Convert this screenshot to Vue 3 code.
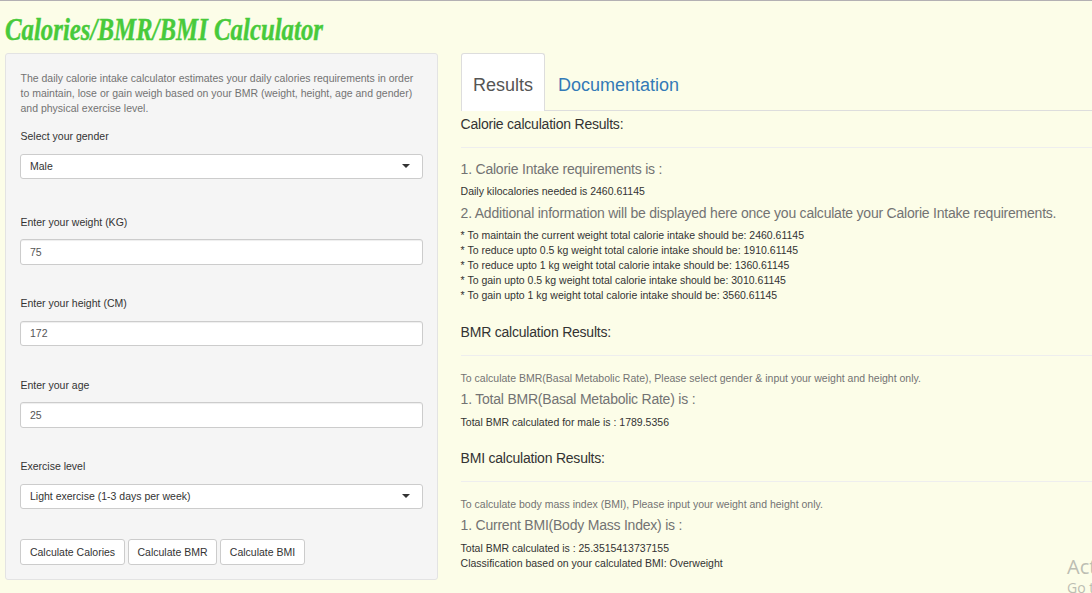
<script setup>
const intake = [
  'To maintain the current weight total calorie intake should be: 2460.61145',
  'To reduce upto 0.5 kg weight total calorie intake should be: 1910.61145',
  'To reduce upto 1 kg weight total calorie intake should be: 1360.61145',
  'To gain upto 0.5 kg weight total calorie intake should be: 3010.61145',
  'To gain upto 1 kg weight total calorie intake should be: 3560.61145',
]
const fields = [
  { label: 'Select your gender', value: 'Male', select: true },
  { label: 'Enter your weight (KG)', value: '75' },
  { label: 'Enter your height (CM)', value: '172' },
  { label: 'Enter your age', value: '25' },
  { label: 'Exercise level', value: 'Light exercise (1-3 days per week)', select: true },
]
const actions = ['Calculate Calories', 'Calculate BMR', 'Calculate BMI']
</script>

<template>
  <div class="page">
    <header>
      <svg class="title" width="330" height="52" viewBox="0 0 330 52">
        <text x="5" y="39" textLength="318" lengthAdjust="spacingAndGlyphs">Calories/BMR/BMI Calculator</text>
      </svg>
    </header>
    <main>
      <section class="panel">
        <p class="intro">
          The daily calorie intake calculator estimates your daily calories requirements in order<br />
          to maintain, lose or gain weigh based on your BMR (weight, height, age and gender)<br />
          and physical exercise level.
        </p>
        <div v-for="(f, i) in fields" :key="f.label" class="field" :class="'f' + i">
          <div class="label">{{ f.label }}</div>
          <div class="control" :class="{ select: f.select }">
            <span>{{ f.value }}</span>
            <svg v-if="f.select" width="8" height="4" viewBox="0 0 8 4"><path d="M0 0H8L4 4Z" /></svg>
          </div>
        </div>
        <div class="actions">
          <button v-for="a in actions" :key="a">{{ a }}</button>
        </div>
      </section>
      <section class="output">
        <nav>
          <a class="active">Results</a>
          <a>Documentation</a>
        </nav>
        <h4 class="first">Calorie calculation Results:</h4>
        <hr />
        <h5 class="lead">1. Calorie Intake requirements is :</h5>
        <p class="daily">Daily kilocalories needed is 2460.61145</p>
        <h5>2. Additional information will be displayed here once you calculate your Calorie Intake requirements.</h5>
        <p v-for="(t, i) in intake" :key="t" :class="{ after: i === 0 }">* {{ t }}</p>
        <h4>BMR calculation Results:</h4>
        <hr />
        <p class="help">To calculate BMR(Basal Metabolic Rate), Please select gender &amp; input your weight and height only.</p>
        <h5>1. Total BMR(Basal Metabolic Rate) is :</h5>
        <p class="total">Total BMR calculated for male is : 1789.5356</p>
        <h4 class="bmi">BMI calculation Results:</h4>
        <hr />
        <p class="help">To calculate body mass index (BMI), Please input your weight and height only.</p>
        <h5>1. Current BMI(Body Mass Index) is :</h5>
        <p class="total">Total BMR calculated is : 25.3515413737155</p>
        <p>Classification based on your calculated BMI: Overweight</p>
      </section>
    </main>
    <div class="watermark"><div>Act</div><small>Go t</small></div>
  </div>
</template>

<style>
html, body { margin: 0; overflow: hidden; background: #fcfde8; }
</style>

<style scoped>
* { box-sizing: border-box; }
.page {
  position: relative;
  width: 1092px;
  height: 593px;
  overflow: hidden;
  background: #fcfde8;
  border-top: 1px solid #b3b0b3;
  color: #333;
  font: 10.5px/15px "Liberation Sans", Arial, sans-serif;
}
header { height: 52px; }
.title { display: block; overflow: visible; }
.title text {
  font: italic bold 31px "Liberation Serif", serif;
  fill: #48ca3b;
  stroke: #48ca3b;
  stroke-width: 0.4px;
}
main { display: flex; align-items: flex-start; }
.panel {
  width: 433px;
  height: 527px;
  margin-left: 5px;
  padding: 17px 14px 0;
  background: #f5f5f5;
  border: 1px solid #e3e3e3;
  border-radius: 3px;
}
p { margin: 0; white-space: nowrap; }
.intro { color: #737373; height: 45px; padding-left: 0.5px; }
.field { height: 81px; }
.f0 { margin-top: 13px; height: 86px; }
.f2 { height: 82px; }
.f4 { height: 80px; }
.label { padding-left: 0.5px; height: 25px; }
.f1 .label, .f3 .label { height: 24px; }
.control {
  display: flex;
  align-items: center;
  justify-content: space-between;
  width: 403px;
  height: 26px;
  padding: 0 12px 0 9px;
  background: #fff;
  border: 1px solid #ccc;
  border-radius: 3px;
  color: #555;
  box-shadow: inset 0 1px 1px rgba(0, 0, 0, 0.07);
}
.f2 .control { height: 25px; }
.control.select { height: 25px; color: #333; box-shadow: none; }
.control svg { fill: #333; margin-bottom: 1px; }
.actions { display: flex; gap: 3px; }
button {
  width: 105px;
  height: 26px;
  padding: 0;
  background: #fff;
  border: 1px solid #ccc;
  border-radius: 3px;
  color: #333;
  font: inherit;
  white-space: nowrap;
}
button:nth-child(2) { width: 89px; }
button:nth-child(3) { width: 85px; }
.output { flex: none; width: 640px; margin-left: 23px; }
.output p, h4, h5 { margin-left: -0.4px; }
nav { display: flex; height: 58px; border-bottom: 1px solid #ddd; }
nav a {
  height: 57px;
  padding: 19px 12px 0;
  border: 1px solid transparent;
  color: #337ab7;
  font-size: 18px;
  line-height: 25px;
}
nav a.active {
  height: 58px;
  padding: 19px 11px 0;
  background: #fff;
  border-color: #ddd;
  border-bottom: 0;
  border-radius: 3px 3px 0 0;
  color: #555;
}
h4, h5 {
  margin-top: 0;
  margin-bottom: 0;
  font-weight: 400;
  font-size: 14px;
  line-height: 20px;
  letter-spacing: -0.22px;
  white-space: nowrap;
}
h4 { margin-top: 19px; }
h4.first { margin-top: 3px; }
h4.bmi { margin-top: 18px; }
h5 { color: #737373; }
hr { margin: 13px 0 15px; border: 0; border-top: 1px solid #eee; }
h5.lead { margin-top: -4px; }
.output .daily { margin-top: 5px; margin-bottom: 4px; }
.output .after { margin-top: 5px; }
.output .help { color: #737373; margin-bottom: 3px; }
.output .total { margin-top: 6px; }
.watermark {
  position: absolute;
  left: 1067px;
  top: 554px;
  width: 60px;
  color: #bdbeb3;
  font: 20px/23px "Open Sans", sans-serif;
}
.watermark small { display: block; font-size: 14px; line-height: 20px; }
</style>
